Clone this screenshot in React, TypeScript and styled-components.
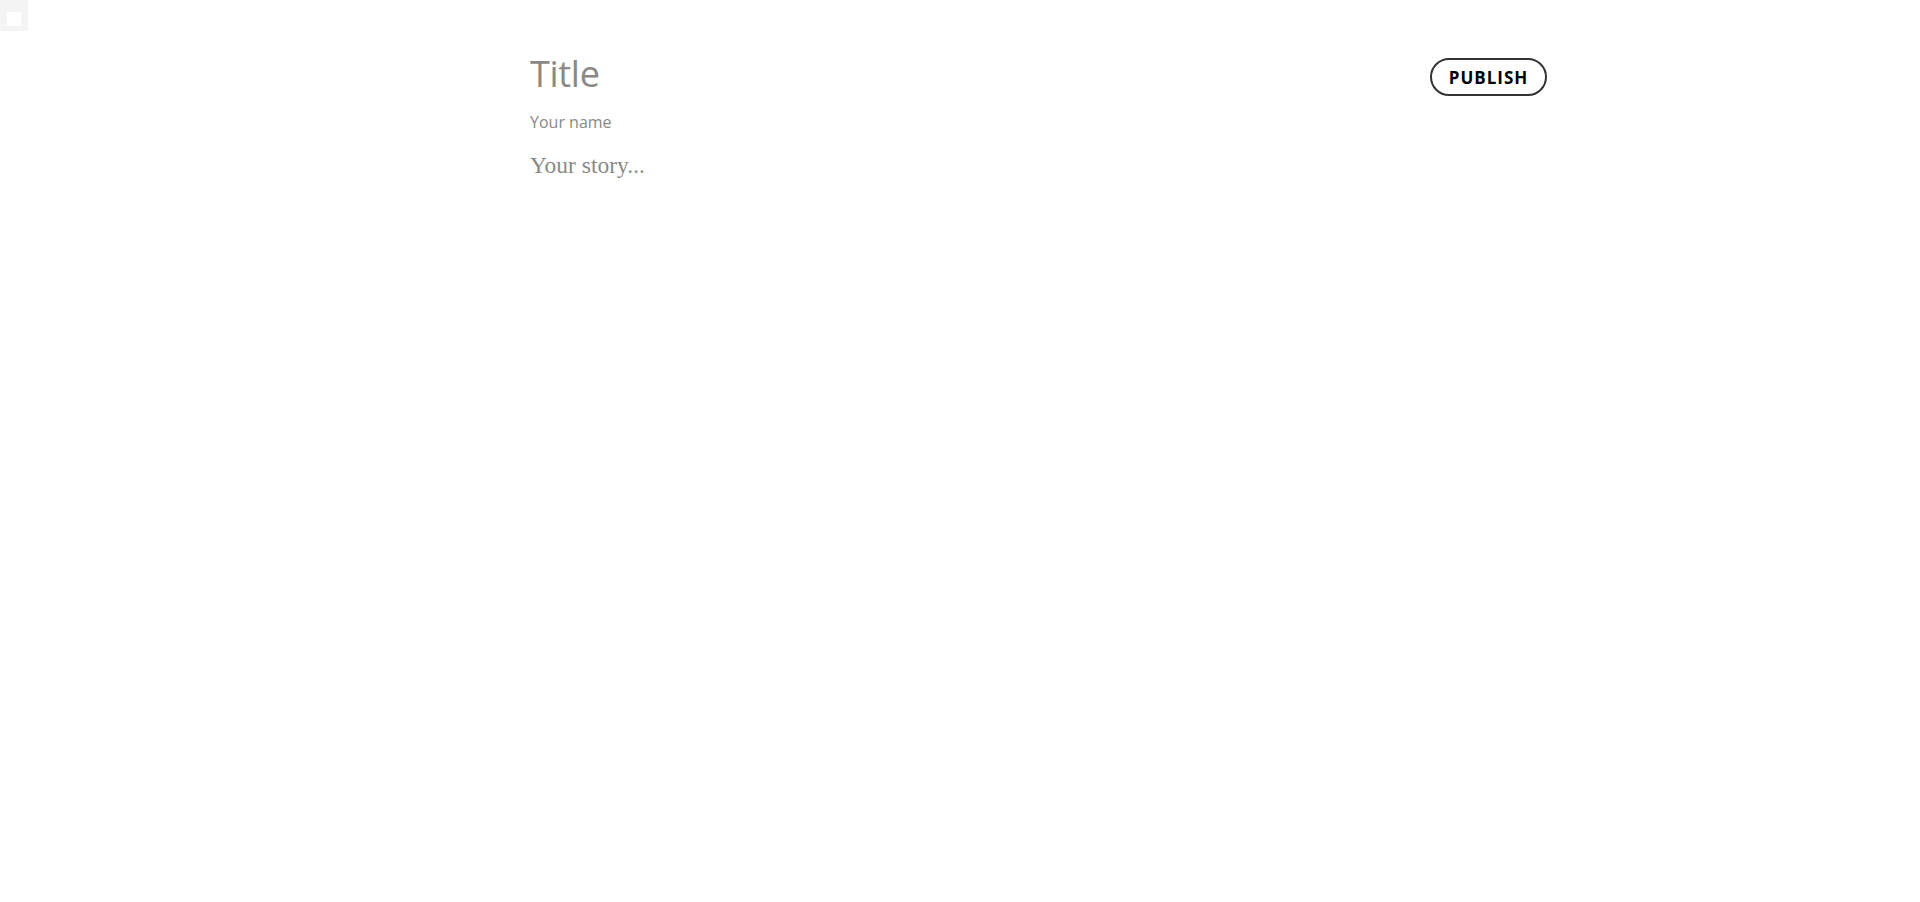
import styled, { createGlobalStyle } from 'styled-components';

const GlobalStyle = createGlobalStyle`
  html, body {
    margin: 0;
    padding: 0;
    background: #fff;
  }
  body {
    font-family: "Open Sans", "Noto Sans", sans-serif;
  }
`;

const Page = styled.div`
  display: grid;
  grid-template-columns: 1fr 860px 1fr;
  padding-top: 51px;
`;

const Article = styled.div`
  grid-column: 2;
  display: flex;
  flex-direction: column;
`;

const Side = styled.div`
  grid-column: 3;
  padding-left: 40px;
  padding-top: 7px;
`;

const Title = styled.h1`
  margin: 0;
  font-family: "Open Sans", sans-serif;
  font-weight: 400;
  font-size: 36px;
  line-height: 46px;
  letter-spacing: -0.3px;
  color: #8a8986;
`;

const Author = styled.div`
  margin-top: 13px;
  font-family: "Open Sans", sans-serif;
  font-size: 16px;
  line-height: 24px;
  color: #8a8986;
`;

const Story = styled.p`
  margin: 15px 0 0;
  font-family: "Liberation Serif", serif;
  font-size: 23.5px;
  line-height: 32px;
  color: #8a8986;
`;

const PublishButton = styled.button`
  display: inline-flex;
  align-items: center;
  justify-content: center;
  height: 38px;
  width: 117px;
  padding: 0;
  border: 2px solid #333;
  border-radius: 19px;
  background: #fff;
  color: #000;
  font-family: "Open Sans", sans-serif;
  font-size: 17px;
  font-weight: 700;
  letter-spacing: 1px;
  cursor: pointer;
`;

const CornerBox = styled.div`
  position: fixed;
  top: 0;
  left: 0;
  width: 28px;
  height: 31px;
  background: #f4f4f4;
  display: flex;
  align-items: center;
  justify-content: center;

  &::after {
    content: '';
    width: 14px;
    height: 14px;
    margin-top: 6px;
    background: #fff;
  }
`;

export default function App() {
  return (
    <>
      <GlobalStyle />
      <CornerBox />
      <Page>
        <Article>
          <Title>Title</Title>
          <Author>Your name</Author>
          <Story>Your story...</Story>
        </Article>
        <Side>
          <PublishButton>PUBLISH</PublishButton>
        </Side>
      </Page>
    </>
  );
}
